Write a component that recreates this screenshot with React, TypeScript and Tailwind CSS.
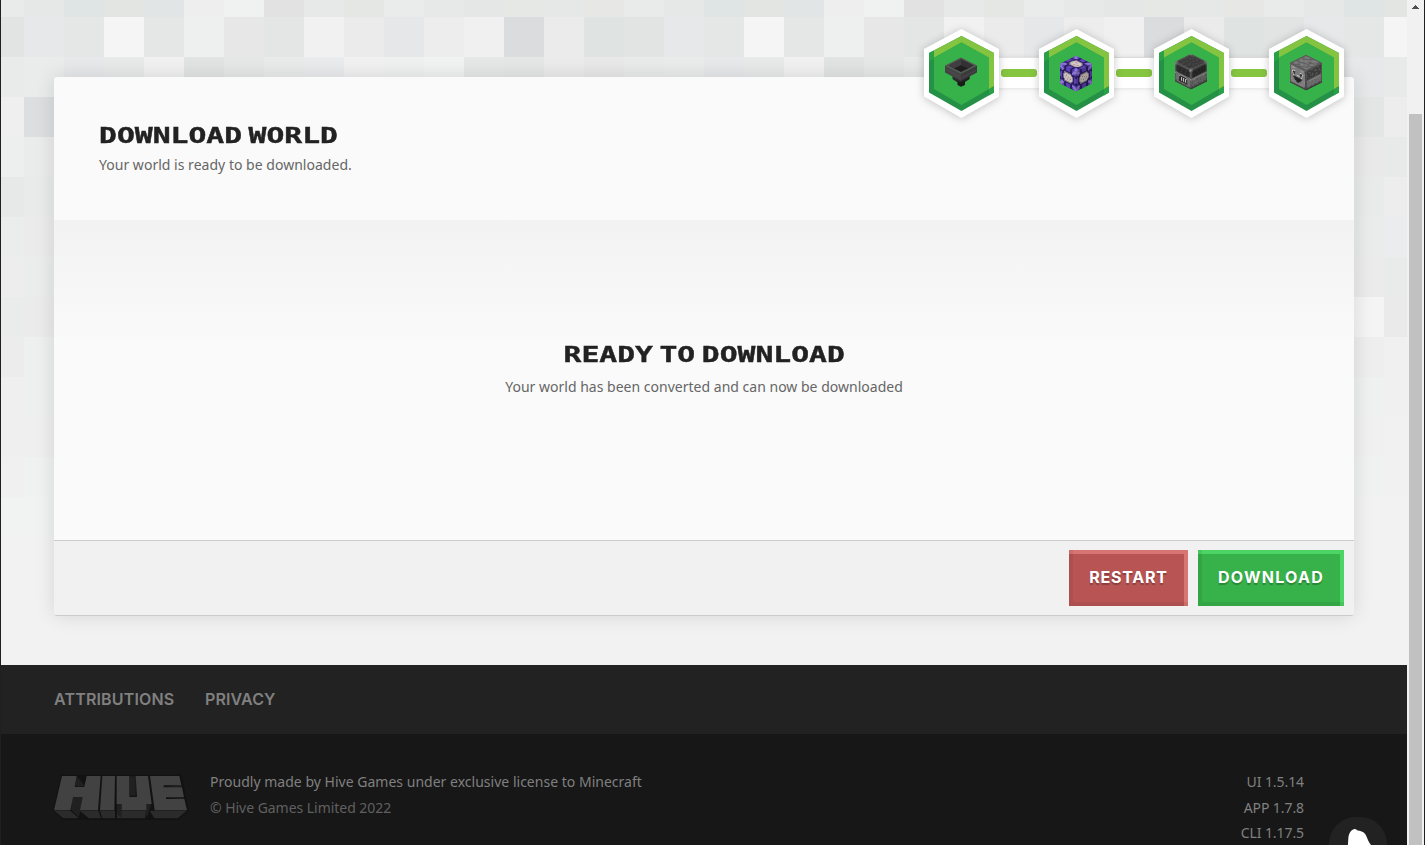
import React from "react";

/* ---------- pixel backdrop ---------- */

const TILE_ROWS: string[] = [
  "e8ebe9 e5e8e6 dfe4e4 e3e5e3 e1e5e5 eeeeee f0f2f1 e2e2e3 e7e9e8 e5e7e5 e9ecea e7e9e8 e4e7e5 e6e8e6 e5e8e6 e7e7e6",
  "e1e4e2 e6e8e9 e4e7e5 f5f5f5 e4e7e5 eef0ef e6e7e6 e4e6e5 f1f1f1 ebebeb e6e7e9 ededed eff0ef dbdcde ebebeb dfe3e2",
  "e9eaea eaeceb e7e8ea e8eae9 f1f1f1 e2e4e3 e6e8e7 e9ebea eaebed f1f1f1 eef1f0 f0f3f2 e5e8e7 e5e7e6 ebebeb e8e8e8",
  "efefef dcdee0 e3e6e5 ededed",
  "edefee eaeceb e9e9e9 e8eae9",
  "e7e9e8 e9ebea e9ebea ededed",
  "ebeded ebebeb e9eceb eaecee",
  "ededed ebeded ebebeb e9eaea",
  "eaecec ebebeb f4f4f4 eaeaea",
  "ececec eef0ef eeeeee f0f0f0",
  "efefef eef0ef eef1f0 f0f0f0",
  "efefef efefef f0f0f0 f1f1f1",
  "f0f0f0 f0f1f1 f0f2f2 f1f1f1",
  "f1f2f2 f1f2f2 f2f2f2 f2f2f2",
];

function Backdrop() {
  return (
    <div className="absolute inset-0 overflow-hidden">
      <div className="-mt-[23px] -ml-[17px] grid w-[1440px] grid-cols-[repeat(36,40px)] auto-rows-[40px]">
        {TILE_ROWS.flatMap((row, r) => {
          const colours = row.split(" ");
          return Array.from({ length: 36 }, (_, c) => (
            <div key={`${r}-${c}`} style={{ backgroundColor: `#${colours[c % 16] ?? "eeeeee"}` }} />
          ));
        })}
      </div>
    </div>
  );
}

/* ---------- isometric blocks ---------- */

type Palette = Record<string, string>;

function Face({ map, palette, transform, shade, base }: { map: string[]; palette: Palette; transform: string; shade: number; base: string }) {
  const s = 16 / map.length;
  return (
    <g transform={transform}>
      <rect width="16" height="16" fill={base} />
      {map.flatMap((line, y) =>
        line.split("").map((ch, x) => (
          <rect
            key={`${x}-${y}`}
            x={x * s}
            y={y * s}
            width={Math.min(s + 0.5, 16 - x * s)}
            height={Math.min(s + 0.5, 16 - y * s)}
            fill={palette[ch]}
          />
        ))
      )}
      <rect width="16" height="16" fill="#000" opacity={shade} />
    </g>
  );
}

function Block({ top, left, right, palette, base, shades }: { top: string[]; left: string[]; right: string[]; palette: Palette; base: string; shades: number[] }) {
  return (
    <svg width="32" height="36" viewBox="0 0 32 36">
      <path d="M16 .3 31.700 8V27L16 35 .3 27V8Z" fill={base} />
      <Face base={base} map={top} palette={palette} transform="matrix(1 .5 -1 .5 16 0)" shade={shades[0]} />
      <Face base={base} map={left} palette={palette} transform="matrix(1 .5 0 1.2 0 8)" shade={shades[1]} />
      <Face base={base} map={right} palette={palette} transform="matrix(1 -.5 0 1.2 16 16)" shade={shades[2]} />
    </svg>
  );
}

const COMMAND: Palette = { p: "#6347bd", d: "#2c1e66", l: "#9681dc", w: "#d8d0cd", t: "#8f8296", r: "#bd7a72", g: "#9fb0a0" };
const COMMAND_FACE = [
  "llppddppppddppll",
  "lllpddppppddplll",
  "plllddppppddlllp",
  "ppldddddddddlppp",
  "ddddtttttttddddd",
  "dpddtwwwwwwtddpd",
  "ppdtwwrwwwwwtdpp",
  "ppdtwwwwrwwwtdpp",
  "ppdtwgwwwwrwtdpp",
  "ppdtwwwrwgwwtdpp",
  "dpddtwwwwwwtddpd",
  "ddddtttttttddddd",
  "ppldddddddddlppp",
  "plllddppppddlllp",
  "lllpddppppddplll",
  "llppddppppddppll",
];

const FURNACE: Palette = { k: "#2a2a2a", c: "#383838", d: "#494949", m: "#585858", g: "#707070", l: "#929292", w: "#d8d8d8" };
const FURNACE_TOP = [
  "lgmmmmmmmmmmmmgl",
  "gmcddccdccdccdmg",
  "mcdddccddcccddcm",
  "mcdccddccddccdcm",
  "mddcdcccdccddccm",
  "mccddcddccdcccdm",
  "mcdccdccddccddcm",
  "mddcccdccccdccdm",
  "mccddccddcdccdcm",
  "mcdccddccccddccm",
  "mdccdcccddccccdm",
  "mcddccdccddcddcm",
  "mccdcdccdccdcccm",
  "mcdccddcccdccddm",
  "gmccdcccddccccmg",
  "lgmmmmmmmmmmmmgl",
];
const FURNACE_LEFT = [
  "lgmmmmmmmmmmmmgl",
  "gmcccccccccccclg",
  "mckkkkkkkkkkkkcm",
  "mckckkcckkcckkcm",
  "mckkkkkkkkkkkkcm",
  "mcckkcckkcckkccm",
  "mckkkkkkkkkkkkcm",
  "mggmmmmmmmmmmggm",
  "lggggllllllggggl",
  "mggglkkkkkklgggm",
  "mgggkkwkwkwkgggm",
  "mgggkkwkwkwkgggm",
  "mgggkkwkwkwkgggm",
  "mggmkkkkkkkkmggm",
  "mmgggmggggmggggm",
  "dddddddddddddddd",
];
const FURNACE_RIGHT = [
  "lgmmmmmmmmmmmmgl",
  "gmccccccccccccmg",
  "mckkckkkkckkkkcm",
  "mckkkkckkkkkckcm",
  "mcckkkkkkckkkkcm",
  "mckkckkckkkkckcm",
  "mckkkkkkkkckkkcm",
  "mmmmmmmmmmmmmmmm",
  "llllllllllllllll",
  "ggglgggggggglggg",
  "ggggggmgggggggmg",
  "gmgggggggmgggggg",
  "gggglgggggggmggg",
  "mggggggmgggggggm",
  "mmgmmmgmmmmgmmmm",
  "dddddddddddddddd",
];

const DROPPER: Palette = { k: "#242424", d: "#444444", m: "#606060", g: "#7c7c7c", h: "#888888", l: "#9b9b9b", w: "#d2d2d2" };
const DROPPER_TOP = [
  "mmmmmmmmmmmmmmmm",
  "mgghhggmgghhggmm",
  "mghhggmmghhhggmm",
  "mgggggmgghhgggmm",
  "mmggmmgggggggmgm",
  "mgmmghhggmmmmggm",
  "mgggghhhggmgghgm",
  "mghhgghgggmghhgm",
  "mghhhggggmmgggmm",
  "mmgggmmmmgggmmgm",
  "mgmmmgghggggmhgm",
  "mghggghhhgggmggm",
  "mhhhgmghhggmmhgm",
  "mghggmmggmmghhgm",
  "mmggmggmmggggggm",
  "mmmmmmmmmmmmmmmm",
];
const DROPPER_LEFT = [
  "mmmmmmmmmmmmmmmm",
  "mhhlhhgggghhhhmd",
  "mhllhggggghllhmd",
  "mhgggggggggggggd",
  "mgllwgggggwllggd",
  "mgwkkgggggkkwggd",
  "mglgkgggggkglggd",
  "mhgggglwwlgggggd",
  "mggwgggggggwgggd",
  "mggkkkkkkkkkgghd",
  "mgggkkkkkkkgghhd",
  "mhggmkkkkkmggghd",
  "mhhgggkkkggggggd",
  "mghhgggmggghhggd",
  "mgggggggggggggmd",
  "dddddddddddddddd",
];
const DROPPER_RIGHT = [
  "mmmmmmmmmmmmmmmm",
  "mddddmmddddmmddm",
  "mdmmddddmmdddddm",
  "mddmmdddmmmddmdm",
  "mmddddmdddddmmdm",
  "mdddmmmmddmdddmm",
  "mdmdddmddmmmdddm",
  "mdddmddddmddddmm",
  "mmmmmmmmmmmmmmmm",
  "mhhlllllllllllhm",
  "mhgghggggghggghm",
  "mgggggghggggghgm",
  "mghgggggggghgggm",
  "mggghggghggggggm",
  "mmggmmggmmggmmgm",
  "dddddddddddddddd",
];

function Hopper() {
  return (
    <svg width="32" height="30" viewBox="0 0 32 30">
      <path d="M7.500 17 16 20 24.500 17V22L21 24.500 16 27 11 24.500 7.500 22Z" fill="#2b2a2b" />
      <path d="M16 20 24.500 17V22L16 26Z" fill="#222122" />
      <path d="M12.500 24 16 25.500 20 24V28L16 29.700 12.500 28Z" fill="#1c1b1c" />
      <path d="M0 8.500 16 16.500V24L0 15.500Z" fill="#454345" />
      <path d="M32 8.500 16 16.500V24L32 15.500Z" fill="#3b393b" />
      <path d="M0 8.500 16 .5 32 8.500 16 16.500Z" fill="#555355" />
      <path d="M3.500 8.500 16 2.300 28.500 8.500 16 14.700Z" fill="#242324" />
      <path d="M3.500 8.500 16 2.300V8.500L9 11.500Z" fill="#403e40" />
      <path d="M28.500 8.500 16 2.300V8.500L23 11.500Z" fill="#333133" />
      <path d="M9 11.500 16 8.500 23 11.500 16 14.700Z" fill="#201f20" />
      <path d="M1 12.500 15 19.500M17 20.500 31 13.500" stroke="#4f4d4f" strokeWidth=".8" fill="none" />
    </svg>
  );
}

/* ---------- progress steps ---------- */

function Step({ children }: { children: React.ReactNode }) {
  return (
    <div className="relative z-10 flex h-[89px] w-[75px] items-center justify-center drop-shadow-[0_1px_4px_rgba(0,0,0,0.22)]">
      <svg className="absolute inset-0" width="75" height="89" viewBox="0 0 75 89">
        <path d="M37.500 0 75 20V67.500L37.500 89 0 67.500V20Z" fill="#fff" />
        <path d="M37.500 7 70 24V63.500L37.500 82 5 63.500V24Z" fill="#259146" />
        <path d="M5 24 10 21.400V30L5 32.500Z" fill="#2aa147" />
        <path d="M65 60V66.400L70 63.500V57Z" fill="#2aa147" />
        <path d="M37.500 7 70 24V57L65 60V29L37.500 13.500 10 29V21.400Z" fill="#84c441" />
        <path d="M37.500 13.500 65 28.500V60L37.500 76 10 60V28.500Z" fill="#37b24a" />
      </svg>
      <div className="relative -ml-px">{children}</div>
    </div>
  );
}

function Link() {
  return (
    <div className="relative mt-[29px] -mx-2 flex h-[30px] w-14 items-start justify-center bg-white pt-[11px] shadow-[0_0_5px_rgba(0,0,0,0.13)]">
      <div className="h-2 w-9 rounded-[3px] bg-[#86c540]" />
    </div>
  );
}

function Steps() {
  return (
    <div className="absolute -top-12 right-[10px] flex items-start">
      <Step>
        <div className="-mt-[3px]"><Hopper /></div>
      </Step>
      <Link />
      <Step>
        <Block base="#3a2983" top={COMMAND_FACE} left={COMMAND_FACE} right={COMMAND_FACE} palette={COMMAND} shades={[0, 0.05, 0.22]} />
      </Step>
      <Link />
      <Step>
        <div className="-mt-[3px]"><Block base="#3b3b3b" top={FURNACE_TOP} left={FURNACE_LEFT} right={FURNACE_RIGHT} palette={FURNACE} shades={[0, 0, 0.15]} /></div>
      </Step>
      <Link />
      <Step>
        <div className="-mt-px"><Block base="#555555" top={DROPPER_TOP} left={DROPPER_LEFT} right={DROPPER_RIGHT} palette={DROPPER} shades={[0.05, 0, 0.15]} /></div>
      </Step>
    </div>
  );
}

/* ---------- footer pieces ---------- */

function HiveLogo() {
  return (
    <svg width="136" height="47" viewBox="160 371 408 141">
      <path d="M185 373H546L567 481 537 508H190L160 480Z" fill="#121212" />
      <path d="M164 481H212L237 504H191ZM240 481H296L304 504H268ZM301 481H346V504H308ZM352 481H440L436 504H352ZM450 481H561L534 504H464Z" fill="#2b2b2b" />
      <path d="M218 442H249L245 474 237 500 214 478ZM232 378 256 408H226ZM390 378H408V436H390ZM352 461H366V502L352 492ZM440 461H455L442 502 436 480ZM495 410H546V404ZM500 442H552V447Z" fill="#202020" />
      <path d="M187 377H231L225 410H254L261 377H303L295 480H241L249 441H220L212 480H163Z" fill="#424242" />
      <path d="M308 377H346L344 480H301Z" fill="#424242" />
      <path d="M351 377H389V440H412L408 377H445L456 461H440V480H366V461H351Z" fill="#424242" />
      <path d="M451 377H539L545 405H492V411H547L553 441H499V446H554L562 480H465Z" fill="#424242" />
    </svg>
  );
}

function Bell() {
  return (
    <div className="absolute -bottom-[29px] left-[1328px] h-[58px] w-[58px] overflow-hidden rounded-[27px] bg-[#222222]">
      <svg width="58" height="58" viewBox="0 0 58 58">
        <path d="M25.500 12C21.500 13 19.500 17 19.300 22L18 40 46 33 42 28C39.500 25.500 38.500 21 36.500 17.500 34.500 14.500 31 13.500 28.500 13.500 27.500 12.200 26.500 11.700 25.500 12Z" fill="#fff" />
      </svg>
    </div>
  );
}

function Scrollbar() {
  return (
    <div className="flex h-full w-[17px] flex-col items-center bg-[#f1f1f1]">
      <div className="flex h-[114px] items-start pt-[5px]">
        <svg width="7" height="4" viewBox="0 0 7 4" shapeRendering="crispEdges">
          <path d="M3 0H4V1H5V2H6V3H7V4H0V3H1V2H2V1H3Z" fill="#505050" />
        </svg>
      </div>
      <div className="w-[13px] flex-1 bg-[#c1c1c1]" />
    </div>
  );
}

const HEADING =
  "w-fit scale-x-[1.35] whitespace-nowrap font-['DejaVu_Sans_Mono',monospace] text-[22px] leading-7 font-bold text-[#222222] [word-spacing:-8.4px] [-webkit-text-stroke:0.4px_#222222]";
const BUTTON =
  "flex h-14 items-center justify-center whitespace-nowrap pb-[2px] font-['Inter',sans-serif] text-base font-bold text-white [text-shadow:0_2px_1px_rgba(0,0,0,0.25)]";

export default function App() {
  return (
    <div className="flex h-[845px] w-[1425px] overflow-hidden bg-[#202022] font-['Noto_Sans',sans-serif] text-sm">
      <div className="relative ml-px flex h-full w-[1406px] flex-col overflow-hidden bg-[#f2f2f2]">
        <Backdrop />

        <main className="relative h-[665px] shrink-0 px-[53px] pt-[77px]">
          <section className="relative flex h-[539px] flex-col rounded-[3px] border-b border-[#cccccc] bg-[#fafafa] shadow-[0_0_20px_rgba(0,0,0,0.12)]">
            <Steps />
            <header className="h-[143px] px-[45px] pt-[45px]">
              <h1 className={`${HEADING} origin-left`}>DOWNLOAD WORLD</h1>
              <p className="mt-1 leading-[22px] tracking-[0.02px] text-[#666666]">Your world is ready to be downloaded.</p>
            </header>
            <div className="flex h-80 flex-col items-center bg-linear-to-b from-[#f2f2f2] to-[#fafafa] to-[120px] pt-[121px]">
              <h2 className={HEADING}>READY TO DOWNLOAD</h2>
              <p className="mt-[7px] leading-[22px] tracking-[0.01px] text-[#666666]">Your world has been converted and can now be downloaded</p>
            </div>
            <footer className="flex flex-1 justify-end gap-[10px] rounded-b-[3px] border-t border-[#cccccc] bg-[#f1f1f1] pt-[9px] pr-[10px]">
              <button className={`${BUTTON} w-[119px] bg-[#b85454] tracking-[0.75px] shadow-[inset_4px_-4px_0_rgba(0,0,0,0.06),inset_-4px_4px_0_#d67572]`}>
                RESTART
              </button>
              <button className={`${BUTTON} w-[146px] bg-[#37b24a] tracking-[1.25px] shadow-[inset_4px_-4px_0_rgba(0,0,0,0.07),inset_-4px_4px_0_#4cd564]`}>
                DOWNLOAD
              </button>
            </footer>
          </section>
        </main>

        <nav className="relative flex h-[69px] shrink-0 items-center gap-[30px] bg-[#222222] px-[53px] pb-[2px] font-['Inter',sans-serif] text-base font-semibold text-[#808080]">
          <a className="w-[121px] whitespace-nowrap tracking-[0.17px]">ATTRIBUTIONS</a>
          <a className="whitespace-nowrap tracking-[0.1px]">PRIVACY</a>
        </nav>

        <div className="relative flex flex-1 items-start bg-[#171717] px-[53px] pt-[35px] text-[#808080]">
          <div className="mt-[5px] -ml-px mr-[21px] w-[136px]"><HiveLogo /></div>
          <div className="leading-[26px]">
            <p className="tracking-[0.015px]">Proudly made by Hive Games under exclusive license to Minecraft</p>
            <p className="tracking-[-0.04px] text-[#606060]">© Hive Games Limited 2022</p>
          </div>
          <div className="mr-[50px] ml-auto text-right leading-[25.500px] tracking-[-0.08px]">
            <p>UI 1.5.14</p>
            <p>APP 1.7.8</p>
            <p>CLI 1.17.5</p>
          </div>
          <Bell />
        </div>
      </div>
      <Scrollbar />
    </div>
  );
}
